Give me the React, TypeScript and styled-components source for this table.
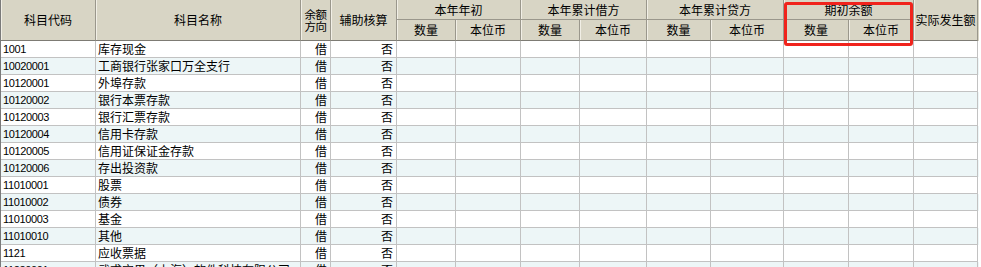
import React from "react";
import styled, { createGlobalStyle, css } from "styled-components";

const colors = {
  headerBg: "#d8d5c5",
  headerLine: "#9a978c",
  headerBottom: "#7d7b74",
  bodyLine: "#c2c2c2",
  rowAlt: "#edf6f7",
  frameEdge: "#7a7a7a",
  mark: "#f0231c",
};

// widths include each column's 1px right border
const columnWidths = [95, 205, 30, 66, 59, 65, 59, 67, 64, 73, 65, 65, 64];
const gridColumns = columnWidths.map((w) => `${w}px`).join(" ");

const cjk = `"Noto Sans CJK SC", "Liberation Sans", sans-serif`;
const latin = `"Liberation Sans", "Noto Sans CJK SC", sans-serif`;

const GlobalStyle = createGlobalStyle`
  html, body {
    margin: 0;
    padding: 0;
    background: #ffffff;
  }
  body {
    font-family: ${cjk};
    color: #000;
  }
`;

const Frame = styled.div`
  position: relative;
  width: 981px;
  height: 267px;
  overflow: hidden;
  background: #ffffff;
`;

const Sheet = styled.div`
  width: ${columnWidths.reduce((a, b) => a + b, 0) + 1}px;
  border-left: 1px solid ${colors.frameEdge};
`;

const HeaderGrid = styled.div`
  display: grid;
  grid-template-columns: ${gridColumns};
  grid-template-rows: 20px 21px;
  background: ${colors.headerBg};
`;

const HeaderCell = styled.div<{
  $col: string;
  $row: string;
  $last?: boolean;
  $stacked?: boolean;
}>`
  grid-column: ${({ $col }) => $col};
  grid-row: ${({ $row }) => $row};
  box-sizing: border-box;
  display: flex;
  align-items: center;
  justify-content: center;
  border-right: 1px solid ${colors.headerLine};
  border-bottom: 1px solid
    ${({ $last }) => ($last ? colors.headerBottom : colors.headerLine)};
  box-shadow: inset 1px 0 0 #f1efe6;
  font-family: ${cjk};
  font-size: 12px;
  line-height: 14px;
  white-space: nowrap;
  overflow: hidden;
  ${({ $stacked }) =>
    $stacked &&
    css`
      flex-direction: column;
      font-size: 11.5px;
      line-height: 12px;
      letter-spacing: -0.5px;
    `}
`;

const Body = styled.div`
  display: flex;
  flex-direction: column;
`;

const Row = styled.div<{ $alt: boolean }>`
  display: grid;
  grid-template-columns: ${gridColumns};
  height: 17px;
  background: ${({ $alt }) => ($alt ? colors.rowAlt : "#ffffff")};
`;

const Cell = styled.div<{ $align?: "left" | "right"; $digits?: boolean }>`
  box-sizing: border-box;
  border-right: 1px solid ${colors.bodyLine};
  border-bottom: 1px solid ${colors.bodyLine};
  padding: 0 3px 0 2px;
  display: flex;
  align-items: center;
  justify-content: ${({ $align }) =>
    $align === "right" ? "flex-end" : "flex-start"};
  font-family: ${({ $digits }) => ($digits ? latin : cjk)};
  font-size: ${({ $digits }) => ($digits ? "11px" : "12px")};
  letter-spacing: ${({ $digits }) => ($digits ? "-0.35px" : "0")};
  line-height: 16px;
  white-space: nowrap;
  overflow: hidden;
`;

const Highlight = styled.div`
  position: absolute;
  left: 784px;
  top: 2px;
  width: 129px;
  height: 44px;
  box-sizing: border-box;
  border: 3px solid ${colors.mark};
  border-radius: 3px;
  pointer-events: none;
`;

const groups = [
  { title: "本年年初", col: "5 / 7" },
  { title: "本年累计借方", col: "7 / 9" },
  { title: "本年累计贷方", col: "9 / 11" },
  { title: "期初余额", col: "11 / 13" },
];

const accounts: [string, string][] = [
  ["1001", "库存现金"],
  ["10020001", "工商银行张家口万全支行"],
  ["10120001", "外埠存款"],
  ["10120002", "银行本票存款"],
  ["10120003", "银行汇票存款"],
  ["10120004", "信用卡存款"],
  ["10120005", "信用证保证金存款"],
  ["10120006", "存出投资款"],
  ["11010001", "股票"],
  ["11010002", "债券"],
  ["11010003", "基金"],
  ["11010010", "其他"],
  ["1121", "应收票据"],
  ["11220001", "武求宝果（上海）软件科技有限公司"],
];

const Header = () => (
  <HeaderGrid>
    <HeaderCell $col="1" $row="1 / 3" $last>
      科目代码
    </HeaderCell>
    <HeaderCell $col="2" $row="1 / 3" $last>
      科目名称
    </HeaderCell>
    <HeaderCell $col="3" $row="1 / 3" $last $stacked>
      <span>余额</span>
      <span>方向</span>
    </HeaderCell>
    <HeaderCell $col="4" $row="1 / 3" $last>
      辅助核算
    </HeaderCell>
    {groups.map((g) => (
      <HeaderCell key={g.title} $col={g.col} $row="1">
        {g.title}
      </HeaderCell>
    ))}
    {groups.map((g, i) => (
      <React.Fragment key={`sub-${g.title}`}>
        <HeaderCell $col={`${5 + i * 2}`} $row="2" $last>
          数量
        </HeaderCell>
        <HeaderCell $col={`${6 + i * 2}`} $row="2" $last>
          本位币
        </HeaderCell>
      </React.Fragment>
    ))}
    <HeaderCell $col="13" $row="1 / 3" $last>
      实际发生额
    </HeaderCell>
  </HeaderGrid>
);

export default function App() {
  return (
    <Frame>
      <GlobalStyle />
      <Sheet>
        <Header />
        <Body>
          {accounts.map(([code, name], i) => (
            <Row key={code} $alt={i % 2 === 1}>
              <Cell $digits>{code}</Cell>
              <Cell>{name}</Cell>
              <Cell $align="right">借</Cell>
              <Cell $align="right">否</Cell>
              {Array.from({ length: 9 }).map((_, k) => (
                <Cell key={k} />
              ))}
            </Row>
          ))}
        </Body>
      </Sheet>
      <Highlight />
    </Frame>
  );
}
